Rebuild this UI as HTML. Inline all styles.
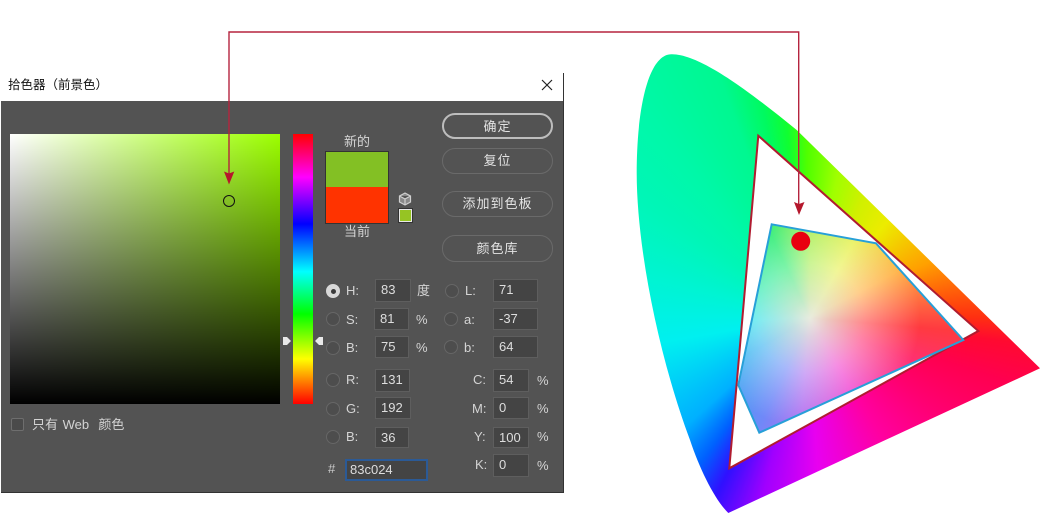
<!DOCTYPE html>
<html><head><meta charset="utf-8">
<style>
html,body{margin:0;padding:0;background:#fff}
#p{position:relative;width:1042px;height:513px;overflow:hidden;background:#fff;font-family:"Liberation Sans","WenQuanYi Zen Hei","Noto Sans CJK SC",sans-serif}
#p div{position:absolute;box-sizing:border-box}
.t{font-size:13px;line-height:16px;color:#d4d4d4;white-space:nowrap}
.c{text-align:center}
.i{background:#444;border:1px solid #5e5e5e;color:#dedede;font-size:13px;line-height:20px;padding-left:5px}
.r{width:14px;height:14px;border-radius:50%;border:1.5px solid #666;background:#4d4d4d}
.b{left:442px;width:111px;border-radius:13px;border:1.5px solid #6a6a6a;color:#e4e4e4;font-size:13px;text-align:center;letter-spacing:1px}
.g{left:630px;top:40px;width:412px;height:473px}
</style></head><body><div id="p">

<div style="left:1px;top:101px;width:563px;height:392px;background:#535353;border-bottom:1px solid #333"></div>
<div style="left:563px;top:73px;width:1px;height:420px;background:#333"></div>
<div style="left:8px;top:77px;font-size:12.500px;line-height:16px;color:#111;white-space:nowrap">拾色器（前景色）</div>
<svg style="position:absolute;left:541px;top:79px" width="12" height="12"><path d="M1 1L11 11M11 1L1 11" stroke="#222" stroke-width="1.200"/></svg>

<div style="left:10px;top:134px;width:270px;height:270px;background:linear-gradient(to top,#000,rgba(0,0,0,0)),linear-gradient(to right,#fff,#9cff00)"></div>
<svg style="position:absolute;left:222px;top:194px" width="14" height="14"><circle cx="7" cy="7" r="5.500" fill="none" stroke="#111" stroke-width="1"/></svg>
<div style="left:293px;top:134px;width:20px;height:270px;background:linear-gradient(to bottom,#f00,#f0f 16%,#00f 33.330%,#0ff 51%,#0f0 66.670%,#ff0 83.330%,#f00)"></div>
<svg style="position:absolute;left:282px;top:335px" width="42" height="12"><path d="M1 2H5L9 6L5 10H1Z" fill="#e8e8e8"/><path d="M41 2H37L33 6L37 10H41Z" fill="#e8e8e8"/></svg>

<div class="t c" style="left:325px;top:134px;width:64px">新的</div>
<div style="left:325px;top:151px;width:64px;height:73px;border:1px solid #333;background:linear-gradient(to bottom,#83c024 0,#83c024 49%,#ff3300 49%)"></div>
<div class="t c" style="left:325px;top:224px;width:64px">当前</div>
<svg style="position:absolute;left:398px;top:192px" width="14" height="14"><path d="M7 1L12.500 4V10L7 13L1.500 10V4ZM1.500 4L7 7L12.500 4M7 7V13" fill="#8a8a8a" stroke="#d0d0d0" stroke-width="1.200"/></svg>
<div style="left:398px;top:208px;width:15px;height:15px;border:1px solid #333;background:#96c423;box-shadow:inset 0 0 0 1px #e8e8e8"></div>

<div class="b" style="top:113px;height:26px;line-height:24px;border-color:#bdbdbd;border-width:2px">确定</div>
<div class="b" style="top:148px;height:26px;line-height:24px">复位</div>
<div class="b" style="top:191px;height:26px;line-height:24px">添加到色板</div>
<div class="b" style="top:235px;height:27px;line-height:25px">颜色库</div>

<div class="r" style="left:326px;top:284px;background:#d8d8d8;border-color:#d8d8d8"></div>
<div style="left:330.500px;top:288.500px;width:5px;height:5px;border-radius:50%;background:#3a3a3a"></div>
<div class="r" style="left:326px;top:312px"></div>
<div class="r" style="left:326px;top:341px"></div>
<div class="r" style="left:326px;top:373px"></div>
<div class="r" style="left:326px;top:402px"></div>
<div class="r" style="left:326px;top:430px"></div>
<div class="r" style="left:445px;top:284px"></div>
<div class="r" style="left:444px;top:312px"></div>
<div class="r" style="left:444px;top:340px"></div>

<div class="t" style="left:346px;top:283px">H:</div>
<div class="t" style="left:346px;top:312px">S:</div>
<div class="t" style="left:346px;top:340px">B:</div>
<div class="t" style="left:346px;top:372px">R:</div>
<div class="t" style="left:346px;top:401px">G:</div>
<div class="t" style="left:346px;top:429px">B:</div>
<div class="t" style="left:328px;top:461px;color:#ccc">#</div>
<div class="t" style="left:465px;top:283px">L:</div>
<div class="t" style="left:464px;top:312px">a:</div>
<div class="t" style="left:464px;top:340px">b:</div>
<div class="t" style="left:473px;top:372px">C:</div>
<div class="t" style="left:472px;top:401px">M:</div>
<div class="t" style="left:474px;top:429px">Y:</div>
<div class="t" style="left:475px;top:457px">K:</div>

<div class="i" style="left:375px;top:279px;width:36px;height:23px">83</div>
<div class="i" style="left:374px;top:308px;width:35px;height:22px">81</div>
<div class="i" style="left:375px;top:336px;width:34px;height:22px">75</div>
<div class="i" style="left:375px;top:369px;width:35px;height:23px">131</div>
<div class="i" style="left:375px;top:397px;width:36px;height:22px">192</div>
<div class="i" style="left:375px;top:427px;width:34px;height:21px">36</div>
<div class="i" style="left:345px;top:459px;width:83px;height:22px;border:2px solid #2b5a96;padding-left:3px;line-height:18px">83c024</div>
<div class="i" style="left:493px;top:279px;width:45px;height:23px">71</div>
<div class="i" style="left:493px;top:308px;width:45px;height:22px">-37</div>
<div class="i" style="left:493px;top:336px;width:45px;height:22px">64</div>
<div class="i" style="left:493px;top:369px;width:36px;height:23px">54</div>
<div class="i" style="left:493px;top:397px;width:36px;height:22px">0</div>
<div class="i" style="left:493px;top:427px;width:36px;height:21px">100</div>
<div class="i" style="left:493px;top:454px;width:36px;height:23px">0</div>

<div class="t" style="left:417px;top:283px">度</div>
<div class="t" style="left:416px;top:312px">%</div>
<div class="t" style="left:416px;top:340px">%</div>
<div class="t" style="left:537px;top:373px">%</div>
<div class="t" style="left:537px;top:401px">%</div>
<div class="t" style="left:537px;top:429px">%</div>
<div class="t" style="left:537px;top:458px">%</div>

<div style="left:11px;top:418px;width:13px;height:13px;border:1.500px solid #6e6e6e;border-radius:2px;background:#4a4a4a"></div>
<div class="t" style="left:32px;top:417px;word-spacing:1px">只有 Web&nbsp; 颜色</div>

<div class="g" style="background:conic-gradient(from 0deg at 177px 277px,#50ff00 0deg,#a0ff00 12deg,#d0f000 25deg,#ecec00 40deg,#ffa000 66deg,#ff3010 90deg,#ff0a30 97deg,#ff0050 108deg,#ff0070 125deg,#ff00a0 148deg,#e800f0 176deg,#a000ff 194deg,#3010ff 207deg,#0060ff 216deg,#00b0ff 228deg,#00f0f0 260deg,#00f4d0 286deg,#00f6b8 305deg,#00f8a8 322deg,#00f890 340deg,#00fa60 348deg,#10ff30 354deg,#50ff00 360deg);clip-path:path('M98.300 473L410 328.300L166.700 90C120 52 70 14 41.700 14.300C18 14 6.700 70 6.700 133C6.700 210 30 320 60 400C70 430 85 460 98.300 473Z')"></div>

<svg style="position:absolute;left:0;top:0" width="1042" height="513"><polygon points="758.300,135.700 978.300,331 729.300,468.300" fill="#fff" stroke="#b01c30" stroke-width="2"/></svg>

<div style="left:630px;top:130px;width:412px;height:383px;background:radial-gradient(circle at 180px 188px,rgba(232,235,222,1) 0,rgba(232,235,222,.8) 18px,rgba(255,255,255,.4) 55px,rgba(255,255,255,0) 110px),conic-gradient(from 0deg at 180px 188px,#a8ee50 0deg,#e8f050 30deg,#ffb040 62deg,#ff3a40 95deg,#ff3070 112deg,#f040d0 150deg,#b070f0 185deg,#7088f8 205deg,#30b0f0 240deg,#20e0e8 268deg,#20e8a8 300deg,#28ec70 335deg,#a8ee50 360deg);clip-path:polygon(141.700px 94.300px,246px 113.300px,333.300px 210px,129.300px 302.700px,108.300px 255px)"></div>
<svg style="position:absolute;left:0;top:0" width="1042" height="513">
<polygon points="771.700,224.300 876,243.300 963.300,340 759.300,432.700 738.300,385" fill="none" stroke="#27a0d8" stroke-width="2"/>
<circle cx="800.700" cy="241.300" r="9.500" fill="#e8000f"/>
<path d="M229 174V32H798.700V204" fill="none" stroke="#b5243f" stroke-width="1.400"/>
<path d="M224 171.500L229 173.500L234.300 171.500L229 184.500Z" fill="#b5172c"/>
<path d="M794 202L799 204L804.500 202L799 215Z" fill="#b5172c"/>
</svg>
</div></body></html>
